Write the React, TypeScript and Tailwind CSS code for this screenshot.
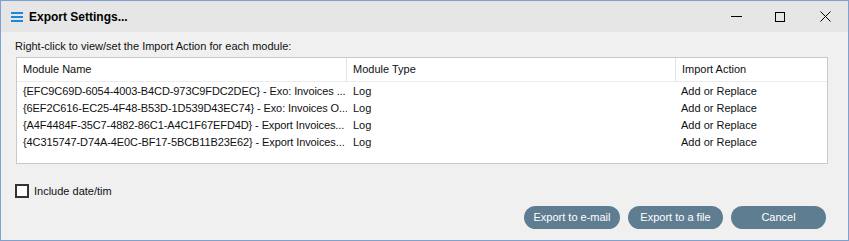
const rows = [
  { name: "{EFC9C69D-6054-4003-B4CD-973C9FDC2DEC} - Exo: Invoices ...", type: "Log", action: "Add or Replace" },
  { name: "{6EF2C616-EC25-4F48-B53D-1D539D43EC74} - Exo: Invoices O...", type: "Log", action: "Add or Replace" },
  { name: "{A4F4484F-35C7-4882-86C1-A4C1F67EFD4D} - Export Invoices...", type: "Log", action: "Add or Replace" },
  { name: "{4C315747-D74A-4E0C-BF17-5BCB11B23E62} - Export Invoices...", type: "Log", action: "Add or Replace" },
];

export default function App() {
  return (
    <div
      className="w-[849px] h-[241px] flex flex-col border border-[#7ea1cf] bg-[#f0f0f0] text-[11px] text-[#101010] overflow-hidden"
      style={{ fontFamily: '"Liberation Sans", Arial, sans-serif' }}
    >
      {/* title bar */}
      <div className="h-[31px] flex items-center bg-[#e6e6e6] shrink-0">
        <svg width="12" height="10" viewBox="0 0 12 10" className="ml-[10px] mr-[6px]">
          <rect x="0" y="0" width="12" height="2" fill="#1e88d6" />
          <rect x="0" y="4" width="12" height="2" fill="#1e88d6" />
          <rect x="0" y="8" width="12" height="2" fill="#1e88d6" />
        </svg>
        <span className="font-bold text-[12px] text-black">Export Settings...</span>
        <div className="ml-auto flex items-center h-full">
          <div className="w-[44px] h-full flex items-center justify-center">
            <div className="w-[11px] h-px bg-black" />
          </div>
          <div className="w-[44px] h-full flex items-center justify-center">
            <div className="w-[10px] h-[10px] border border-black" />
          </div>
          <div className="w-[46px] h-full flex items-center justify-center">
            <svg width="11" height="11" viewBox="0 0 11 11">
              <path d="M0.5 0.5 L10.5 10.5 M10.5 0.5 L0.5 10.5" stroke="#000" strokeWidth="1" />
            </svg>
          </div>
        </div>
      </div>

      {/* body */}
      <div className="flex flex-col px-[14px] pt-[7px]">
        <div className="leading-[15px]">Right-click to view/set the Import Action for each module:</div>
        <div className="mt-[3px] ml-px w-[812px] h-[107px] border border-[#c9c9c9] bg-white flex flex-col">
          <div className="grid grid-cols-[330px_329px_1fr] h-[24px] border-b border-[#ececec] items-stretch">
            <div className="border-r border-[#e3e3e3] pl-[6px] flex items-center">Module Name</div>
            <div className="border-r border-[#e3e3e3] pl-[6px] flex items-center">Module Type</div>
            <div className="pl-[6px] flex items-center">Import Action</div>
          </div>
          <div className="pt-px">
            {rows.map((r, i) => (
              <div key={i} className="grid grid-cols-[330px_329px_1fr] h-[17px] items-center">
                <div className="pl-[6px] whitespace-nowrap overflow-hidden tracking-[-0.1px]">{r.name}</div>
                <div className="pl-[6px]">{r.type}</div>
                <div className="pl-[5px]">{r.action}</div>
              </div>
            ))}
          </div>
        </div>

        <label className="mt-[19px] flex items-center gap-[5px]">
          <span className="w-[14px] h-[14px] border-2 border-[#333] bg-white" />
          <span>Include date/tim</span>
        </label>

        <div className="mt-[6px] flex justify-end gap-[8px] pr-[8px]">
          <button className="w-[96px] h-[23px] rounded-full bg-[#5f7d91] text-white text-[11px]">Export to e-mail</button>
          <button className="w-[95px] h-[23px] rounded-full bg-[#5f7d91] text-white text-[11px]">Export to a file</button>
          <button className="w-[95px] h-[23px] rounded-full bg-[#5f7d91] text-white text-[11px]">Cancel</button>
        </div>
      </div>
    </div>
  );
}
